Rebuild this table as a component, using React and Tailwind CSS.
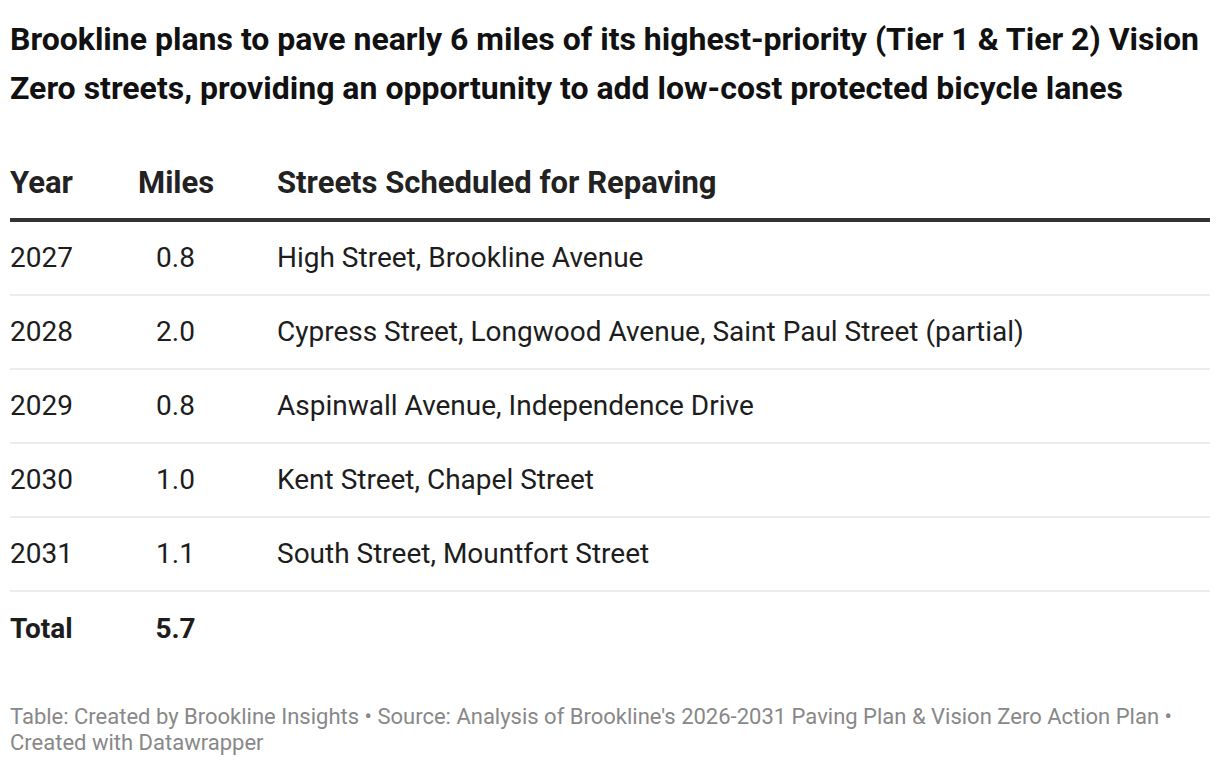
const rows = [
  { year: "2027", miles: "0.8", streets: "High Street, Brookline Avenue" },
  { year: "2028", miles: "2.0", streets: "Cypress Street, Longwood Avenue, Saint Paul Street (partial)" },
  { year: "2029", miles: "0.8", streets: "Aspinwall Avenue, Independence Drive" },
  { year: "2030", miles: "1.0", streets: "Kent Street, Chapel Street" },
  { year: "2031", miles: "1.1", streets: "South Street, Mountfort Street" },
];

export default function App() {
  return (
    <div className="min-h-screen bg-white px-[10px] pt-[15px] font-['Roboto',sans-serif]">
      <h1 className="text-[32px] font-bold leading-[49px] text-[#111]">
        Brookline plans to pave nearly 6 miles of its highest-priority (Tier 1 &amp; Tier 2) Vision
        Zero streets, providing an opportunity to add low-cost protected bicycle lanes
      </h1>

      <div className="mt-[52px]">
        <div className="grid grid-cols-[128px_75px_1fr] border-b-4 border-[#333] pb-[17px] text-[31px] font-bold leading-[36px] text-[#222]">
          <div>Year</div>
          <div className="text-center">Miles</div>
          <div className="pl-[64px]">Streets Scheduled for Repaving</div>
        </div>

        {rows.map((r) => (
          <div
            key={r.year}
            className="grid h-[74px] grid-cols-[128px_75px_1fr] items-center border-b-2 border-[#ececec] text-[28px] text-[#1d1d1d]"
          >
            <div>{r.year}</div>
            <div className="text-center">{r.miles}</div>
            <div className="pl-[64px]">{r.streets}</div>
          </div>
        ))}

        <div className="grid h-[74px] grid-cols-[128px_75px_1fr] items-center text-[28px] font-bold text-[#1d1d1d]">
          <div>Total</div>
          <div className="text-center">5.7</div>
          <div></div>
        </div>
      </div>

      <p className="mt-[38px] text-[22px] leading-[26px] text-[#888]">
        Table: Created by Brookline Insights • Source: Analysis of Brookline's 2026-2031 Paving Plan &amp; Vision Zero Action Plan •
        Created with Datawrapper
      </p>
    </div>
  );
}
